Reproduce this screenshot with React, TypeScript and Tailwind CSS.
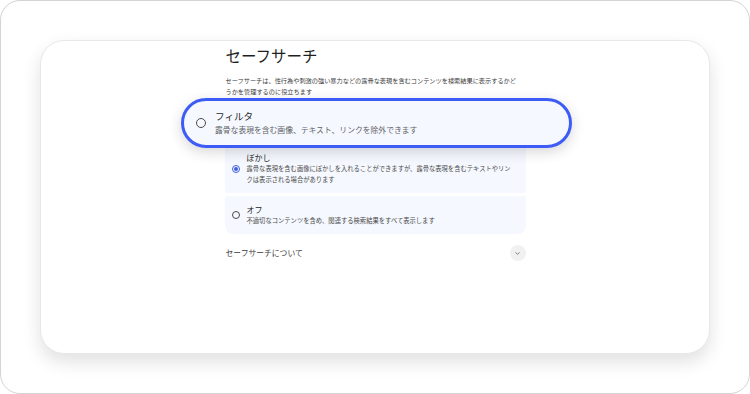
import { ChevronDown } from "lucide-react";

const jp = { fontFamily: '"Noto Sans CJK JP", "Noto Sans", sans-serif' };

type Option = {
  title: string;
  lines: string[];
  checked?: boolean;
  className: string;
};

const options: Option[] = [
  {
    title: "ぼかし",
    lines: [
      "露骨な表現を含む画像にぼかしを入れることができますが、露骨な表現を含むテキストやリン",
      "クは表示される場合があります",
    ],
    checked: true,
    className: "rounded-[3px]",
  },
  {
    title: "オフ",
    lines: ["不適切なコンテンツを含め、関連する検索結果をすべて表示します"],
    className: "rounded-t-[3px] rounded-b-[8px]",
  },
];

function Radio({ checked, size }: { checked?: boolean; size: number }) {
  if (checked) {
    return (
      <span
        className="flex shrink-0 items-center justify-center rounded-full border-[1.3px] border-[#3f5fe0]"
        style={{ width: size, height: size }}
      >
        <span className="h-[4px] w-[4px] rounded-full bg-[#3f5fe0]" />
      </span>
    );
  }
  return (
    <span
      className="shrink-0 rounded-full border-[1.3px] border-[#4a4a4a]"
      style={{ width: size, height: size }}
    />
  );
}

function OptionRow({ option }: { option: Option }) {
  return (
    <div className={`flex items-center gap-[7px] bg-[#f5f8fe] py-[8px] pl-[7px] pr-[8px] ${option.className}`}>
      <Radio checked={option.checked} size={8} />
      <div>
        <div className="text-[8px] leading-[11px] text-[#1f1f1f]">{option.title}</div>
        {option.lines.map((line) => (
          <div key={line} className="whitespace-nowrap text-[6.3px] leading-[11px] text-[#4a4a4a]">
            {line}
          </div>
        ))}
      </div>
    </div>
  );
}

export default function App() {
  return (
    <div className="h-[394px] w-[750px] bg-white" style={jp}>
      <div className="h-full w-full rounded-[20px] border border-[#d4d4d4] px-[39px] pb-[39px] pt-[39px]">
        <div className="flex h-full justify-center rounded-[24px] border border-[#e8e8e8] bg-white shadow-[0_8px_18px_rgba(0,0,0,0.12)]">
          <div className="w-[301px] pt-[4px]">
            <h1 className="pl-[1px] text-[15.5px] font-normal leading-[20px] text-[#1f1f1f]">セーフサーチ</h1>
            <div className="mt-[10px] pl-[1px] text-[6.2px] leading-[11px] text-[#3c3c3c]">
              <div className="whitespace-nowrap">
                セーフサーチは、性行為や刺激の強い暴力などの露骨な表現を含むコンテンツを検索結果に表示するかど
              </div>
              <div>うかを管理するのに役立ちます</div>
            </div>

            <div className="mt-[7px] flex flex-col gap-[3px]">
              {/* selected row is shown enlarged over its own slot */}
              <div className="relative h-[37px] rounded-t-[8px] rounded-b-[3px] bg-[#f5f8fe]">
                <div className="absolute left-[-44px] top-[-6px] z-10 flex h-[50px] w-[391px] items-center gap-[9.5px] rounded-[25px] border-[3px] border-[#3d5cf5] bg-[#f5f8fe] pl-[12.5px] shadow-[0_4px_14px_rgba(0,0,0,0.16)]">
                  <Radio size={9.5} />
                  <div>
                    <div className="text-[9.6px] leading-[13px] text-[#2a2a2a]">フィルタ</div>
                    <div className="text-[7.8px] leading-[13px] text-[#5f6368]">
                      露骨な表現を含む画像、テキスト、リンクを除外できます
                    </div>
                  </div>
                </div>
              </div>
              {options.map((option) => (
                <OptionRow key={option.title} option={option} />
              ))}
            </div>

            <div className="mt-[11px] flex items-center justify-between pl-[1px]">
              <span className="text-[7.8px] leading-[16px] text-[#3c3c3c]">セーフサーチについて</span>
              <span className="flex h-[16px] w-[16px] items-center justify-center rounded-full bg-[#f1f1f1]">
                <ChevronDown size={7} strokeWidth={2.5} className="text-[#555]" />
              </span>
            </div>
          </div>
        </div>
      </div>
    </div>
  );
}
